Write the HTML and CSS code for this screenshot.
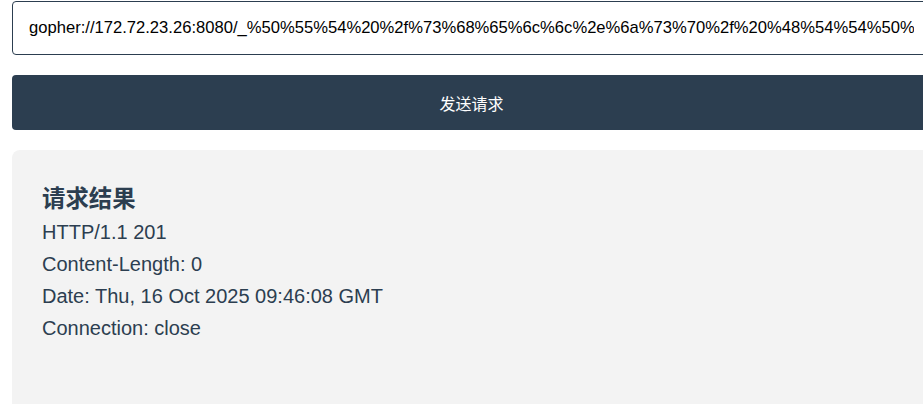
FILE: index.html
```html
<!DOCTYPE html>
<html lang="zh-CN">
<head>
    <meta charset="UTF-8">
    <meta name="viewport" content="width=device-width, initial-scale=1.0">
    <title>请求工具</title>
    <link rel="stylesheet" href="styles.css">
</head>
<body>
    <div class="container">
        <input type="text" class="url-input" value="gopher://172.72.23.26:8080/_%50%55%54%20%2f%73%68%65%6c%6c%2e%6a%73%70%2f%20%48%54%54%50%2f%31%2e%31%0d%0a">
        <button class="send-btn">发送请求</button>
        <div class="result">
            <h3>请求结果</h3>
            <div class="result-body">
                <div>HTTP/1.1 201</div>
                <div>Content-Length: 0</div>
                <div>Date: Thu, 16 Oct 2025 09:46:08 GMT</div>
                <div>Connection: close</div>
            </div>
        </div>
    </div>
</body>
</html>
```

FILE: styles.css
```css
html, body {
    margin: 0;
    overflow: hidden;
    background-color: #fff;
    font-family: 'Liberation Sans', 'Noto Sans CJK SC', sans-serif;
}
.container {
    display: flex;
    flex-direction: column;
    gap: 20px;
    width: 919px;
    padding: 1px 0 0 12px;
}
.url-input {
    box-sizing: border-box;
    width: 100%;
    height: 54px;
    padding: 0 16px;
    font-family: 'Liberation Sans', sans-serif;
    font-size: 16.6px;
    color: #000;
    border: 1px solid #2c3e50;
    border-radius: 4px;
    outline: none;
}
.send-btn {
    height: 55px;
    font-family: 'Liberation Sans', 'Noto Sans CJK SC', sans-serif;
    font-size: 16px;
    color: #fff;
    background-color: #2c3e50;
    border: none;
    border-radius: 4px;
    cursor: pointer;
}
.result {
    min-height: 300px;
    padding: 32px 30px;
    background-color: #f3f3f3;
    border-radius: 8px;
    color: #2c3e50;
    font-size: 20px;
}
.result h3 {
    margin: 0;
    font-size: 1.17em;
    line-height: 34px;
    font-weight: bold;
}
.result-body {
    line-height: 32px;
}
```
